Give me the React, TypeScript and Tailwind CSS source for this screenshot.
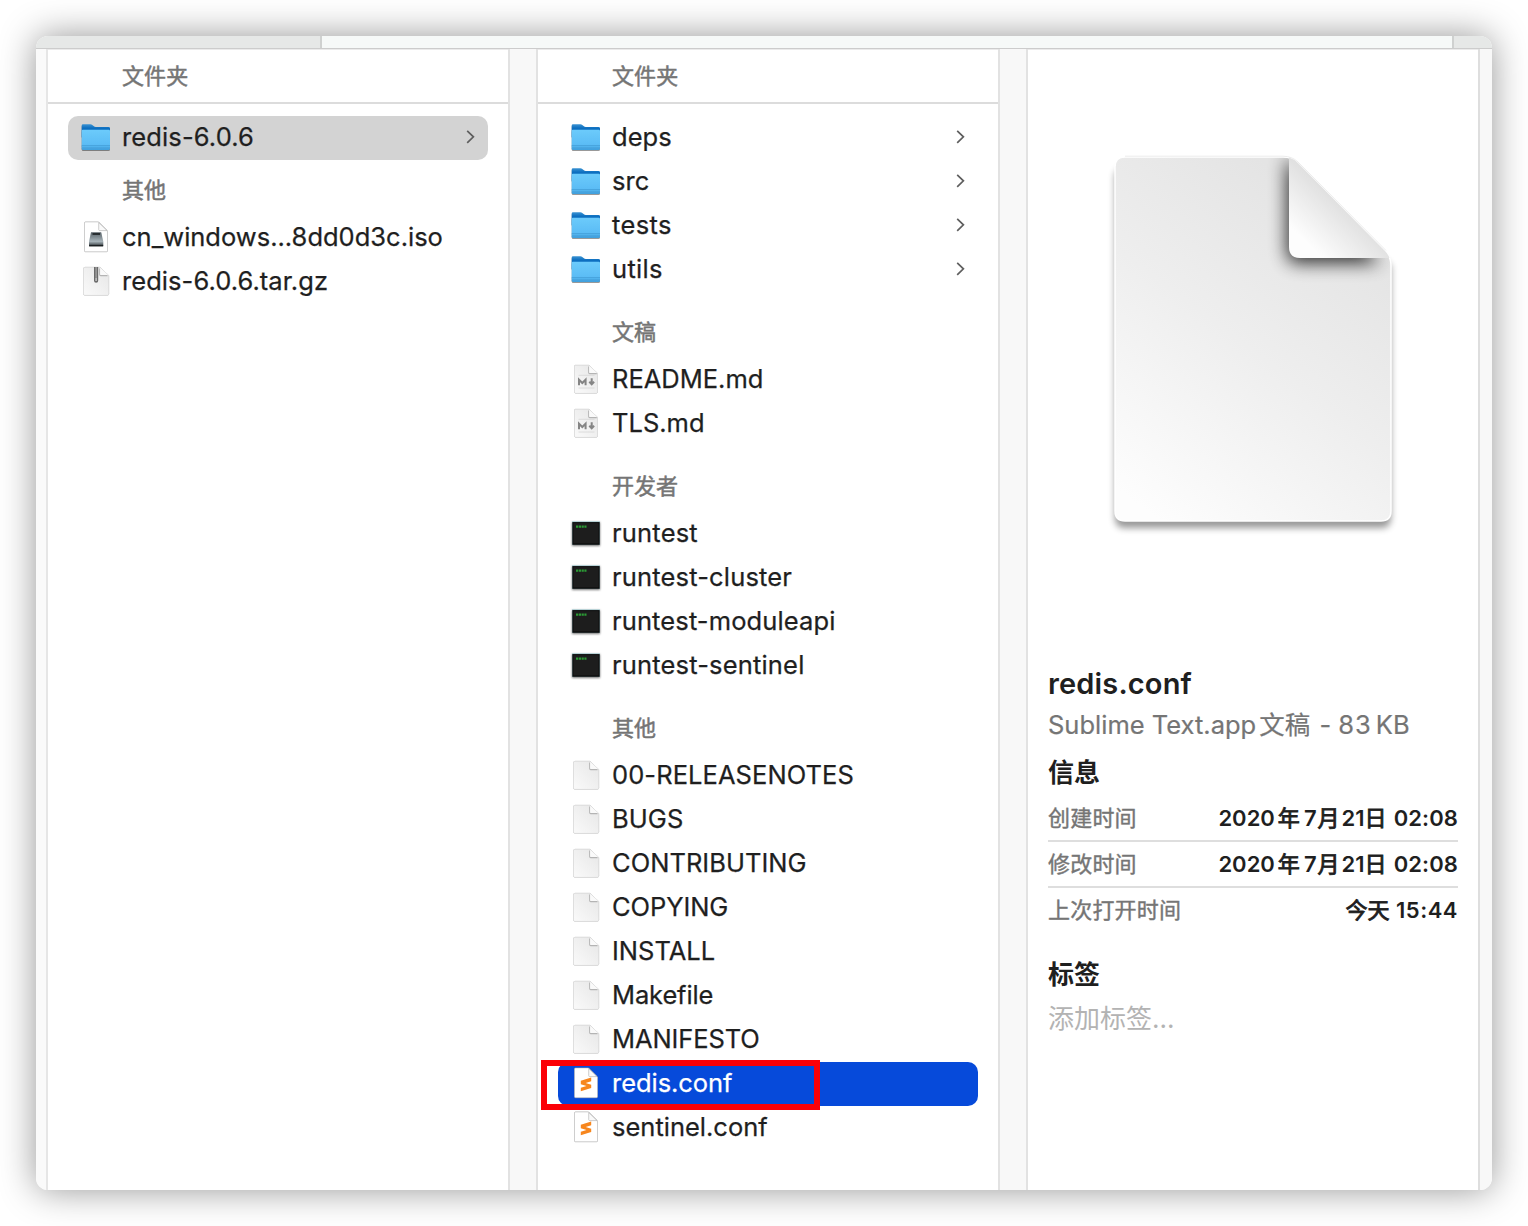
import type { ReactNode } from "react";

type Kind = "folder" | "iso" | "zip" | "md" | "exec" | "doc" | "sublime";
type Item = { name: string; kind: Kind; track?: string };

function Defs() {
  return (
    <svg className="absolute h-0 w-0">
      <defs>
        <linearGradient id="fBack" x1="0" y1="0" x2="0" y2="1">
          <stop offset="0" stopColor="#3b93d2" />
          <stop offset="0.3" stopColor="#0d6fc0" />
        </linearGradient>
        <linearGradient id="fFront" x1="0" y1="0" x2="0" y2="1">
          <stop offset="0" stopColor="#6ccbfb" />
          <stop offset="0.75" stopColor="#5bbcf5" />
          <stop offset="1" stopColor="#3f9fdc" />
        </linearGradient>
        <linearGradient id="pg" x1="1" y1="0" x2="0" y2="1">
          <stop offset="0" stopColor="#e6e6e6" />
          <stop offset="1" stopColor="#fafafa" />
        </linearGradient>
        <linearGradient id="drive" x1="0" y1="0" x2="0" y2="1">
          <stop offset="0" stopColor="#566066" />
          <stop offset="0.65" stopColor="#a8b4ba" />
          <stop offset="1" stopColor="#30363a" />
        </linearGradient>
      </defs>
    </svg>
  );
}

function Icon({ kind }: { kind: Kind }) {
  if (kind === "folder")
    return (
      <svg viewBox="0 0 32 32" className="h-8 w-8 drop-shadow-[0_1px_0.5px_rgba(0,0,0,0.4)]">
        <path d="M1.700 3.500Q1.700 2.300 3 2.300h7.500q1 0 1.800.7l1.600 1.200q.8.700 1.800.7H28.500Q30 4.900 30 6.200V15H1.700Z" fill="url(#fBack)" />
        <path d="M1.700 9Q1.700 7.700 2.900 7.700H28.800Q30 7.700 30 9V26.500q0 1.500-1.500 1.500H3.200Q1.700 28 1.700 26.500Z" fill="url(#fFront)" />
        <path d="M1.700 23.500H30M1.700 26H30" stroke="#429cd6" strokeWidth="0.7" />
      </svg>
    );
  if (kind === "exec")
    return (
      <svg viewBox="0 0 32 32" className="h-8 w-8 drop-shadow-[0_1px_1px_rgba(0,0,0,0.55)]">
        <rect x="2" y="3.300" width="28" height="23.500" fill="#a9cdd3" />
        <rect x="2.300" y="4.100" width="27.400" height="22.700" fill="#050505" />
        <rect x="3.300" y="5.100" width="25.400" height="20.500" fill="#1d1d1d" />
        <path d="M6 8.600h10.500" stroke="#2b9a35" strokeWidth="2.400" strokeDasharray="2.200 0.600" />
      </svg>
    );
  const white = kind === "iso" || kind === "sublime";
  return (
    <svg viewBox="0 0 32 32" className="h-8 w-8 overflow-visible drop-shadow-[0_0.5px_0.700px_rgba(0,0,0,0.35)]">
      <path
        d={
          white
            ? "M5.500 0H18.500L27.500 9V28.700a1 1 0 0 1-1 1H5.500a1 1 0 0 1-1-1V1a1 1 0 0 1 1-1Z"
            : kind === "md"
              ? "M5.500 1.300H19L27.500 9.300V27.800a1.500 1.500 0 0 1-1.500 1.500H6A1.500 1.500 0 0 1 4.500 27.800V2.300a1 1 0 0 1 1-1Z"
              : "M5 1.300H20L28.700 9.500V27.800a1.500 1.500 0 0 1-1.500 1.500H5A1.500 1.500 0 0 1 3.500 27.800V2.800A1.500 1.500 0 0 1 5 1.300Z"
        }
        fill={white ? "#ffffff" : "url(#pg)"}
        stroke={white ? "#c4c4c4" : "#e4e4e4"}
        strokeWidth="0.600"
      />
      {white ? (
        <path d="M18.700 0.500V7.600a1 1 0 0 0 1 1H27Z" fill="#fafafa" stroke="#b8b8b8" strokeWidth="0.700" />
      ) : kind === "md" ? (
        <>
          <path d="M18.700 2.500V8.600a1 1 0 0 0 1 1H26.800" fill="none" stroke="#b4b4b4" strokeWidth="1.100" />
          <path d="M19.200 1.700V8.300a.8.800 0 0 0 .8.800H27Z" fill="#fafafa" />
        </>
      ) : (
        <>
          <path d="M19.700 2.500V8.600a1 1 0 0 0 1 1H27.500" fill="none" stroke="#b4b4b4" strokeWidth="1.100" />
          <path d="M20.200 1.700V8.300a.8.800 0 0 0 .8.800H28Z" fill="#fafafa" />
        </>
      )}
      {kind === "iso" && (
        <>
          <path d="M11 10.300H21.200L23.300 19.500V24.300H9V19.500Z" fill="url(#drive)" />
          <path d="M12.500 12H20" stroke="#15191b" strokeWidth="1.500" />
          <path d="M9.200 23.600H23.100" stroke="#1b1f21" strokeWidth="1.400" />
        </>
      )}
      {kind === "zip" && (
        <>
          <path d="M14 1H18.200V14.700a2.100 2.100 0 0 1-4.200 0Z" fill="#6a6a6a" />
          <path d="M16.100 1.500V10.500" stroke="#c9c9c9" strokeWidth="1.600" strokeDasharray="1 1" />
          <path d="M16.100 11.500V15" stroke="#d5d5d5" strokeWidth="1.300" />
        </>
      )}
      {kind === "md" && (
        <>
          <path d="M8.500 11.300H24.500M8.500 24H24.500" stroke="#d6d6d6" strokeWidth="0.800" />
          <path d="M9 21.300V15.700L12.300 19L15.600 15.700V21.300" fill="none" stroke="#858585" strokeWidth="2" />
          <path d="M21.700 14.300V20M19.300 17.700L21.700 20.200L24.100 17.700" fill="none" stroke="#858585" strokeWidth="2" />
        </>
      )}
      {kind === "sublime" && (
        <path d="M10.800 12.700L21.200 9.500V13.200L15.700 15L21.200 16.700V20.100L10.800 23.300V19.700L16.500 17.900L10.800 16.200Z" fill="#f7861d" />
      )}
    </svg>
  );
}

function Row({ item, arrow, state }: { item: Item; arrow?: boolean; state?: "gray" | "blue" }) {
  const bg = state === "gray" ? "bg-[#d3d3d3]" : state === "blue" ? "bg-[#064ada]" : "";
  return (
    <div className={`mx-5 flex h-11 items-center rounded-[10px] px-3 ${bg}`}>
      <Icon kind={item.kind} />
      <span
        className={`ml-2.5 flex-1 whitespace-nowrap pb-0.5 text-[25.500px] leading-[34px] [-webkit-text-stroke:0.25px_currentColor] ${item.track ?? ""} ${state === "blue" ? "text-white" : "text-[#1f1f1f]"}`}
      >
        {item.name}
      </span>
      {arrow && (
        <svg viewBox="0 0 12 16" className="mb-0.5 h-4 w-3">
          <path d="M3.200 1.800L9.400 7.800L3.200 13.800" fill="none" stroke="#5f5f5f" strokeWidth="1.700" />
        </svg>
      )}
    </div>
  );
}

function Group({ title, first }: { title: string; first?: boolean }) {
  return (
    <div
      className={`flex items-end pb-[11px] pl-[74px] text-[22px] leading-[30px] text-[#757575] [-webkit-text-stroke:0.5px_currentColor] ${first ? "h-14" : "h-[66px]"}`}
    >
      {title}
    </div>
  );
}

function Header() {
  return (
    <div className="mb-3 h-[54px] border-b-2 border-[#dcdcdc] pl-[74px] pt-[11px] text-[22px] leading-[30px] tracking-[0.1px] text-[#757575] [-webkit-text-stroke:0.5px_currentColor]">
      文件夹
    </div>
  );
}

function Gutter() {
  return <div className="w-[30px] shrink-0 border-x-2 border-[#e2e2e2] bg-[#f8f8f8]" />;
}

const top: Item = { name: "redis-6.0.6", kind: "folder", track: "tracking-[0.12px]" };
const others: Item[] = [
  { name: "cn_windows...8dd0d3c.iso", kind: "iso" },
  { name: "redis-6.0.6.tar.gz", kind: "zip", track: "tracking-[0.06px]" },
];
const folders: Item[] = [
  { name: "deps", kind: "folder", track: "tracking-[0.05px]" },
  { name: "src", kind: "folder", track: "tracking-[0.1px]" },
  { name: "tests", kind: "folder", track: "tracking-[0.4px]" },
  { name: "utils", kind: "folder", track: "tracking-[0.3px]" },
];
const docs: Item[] = [
  { name: "README.md", kind: "md" },
  { name: "TLS.md", kind: "md" },
];
const dev: Item[] = [
  { name: "runtest", kind: "exec", track: "tracking-[0.2px]" },
  { name: "runtest-cluster", kind: "exec", track: "tracking-[0.17px]" },
  { name: "runtest-moduleapi", kind: "exec", track: "tracking-[0.12px]" },
  { name: "runtest-sentinel", kind: "exec", track: "tracking-[0.17px]" },
];
const misc: Item[] = [
  { name: "00-RELEASENOTES", kind: "doc", track: "tracking-[0.08px]" },
  { name: "BUGS", kind: "doc", track: "tracking-[0.1px]" },
  { name: "CONTRIBUTING", kind: "doc", track: "tracking-[0.03px]" },
  { name: "COPYING", kind: "doc", track: "tracking-[-0.08px]" },
  { name: "INSTALL", kind: "doc" },
  { name: "Makefile", kind: "doc", track: "tracking-[-0.13px]" },
  { name: "MANIFESTO", kind: "doc", track: "tracking-[-0.1px]" },
];

function Cjk({ children, className = "" }: { children: ReactNode; className?: string }) {
  return <span className={`font-normal [-webkit-text-stroke:0.9px_currentColor] ${className}`}>{children}</span>;
}

const modified = (
  <>
    2020<Cjk className="ml-[3px] mr-1">年</Cjk>7<Cjk className="ml-px mr-0.5">月</Cjk>21<Cjk className="mr-[1.500px]">日</Cjk>{" "}
    <span className="tracking-[0.1px]">02:08</span>
  </>
);

const info: [string, ReactNode][] = [
  ["创建时间", modified],
  ["修改时间", modified],
  [
    "上次打开时间",
    <>
      <Cjk>今天</Cjk> <span className="ml-px tracking-[0.5px]">15:44</span>
    </>,
  ],
];

const BIG_PAGE =
  "M77 107H235Q244 107 250 113L337 201Q343 207 343 216V461Q343 471 333 471H77Q67 471 67 461V117Q67 107 77 107Z";

function Preview() {
  return (
    <svg viewBox="0 0 410 596" className="h-[596px] w-[410px]">
      <defs>
        <linearGradient id="big" gradientUnits="userSpaceOnUse" x1="320" y1="190" x2="110" y2="470">
          <stop offset="0" stopColor="#e4e4e4" />
          <stop offset="0.450" stopColor="#eeeeee" />
          <stop offset="1" stopColor="#fdfdfd" />
        </linearGradient>
        <linearGradient id="fold" gradientUnits="userSpaceOnUse" x1="292" y1="156" x2="258" y2="192">
          <stop offset="0" stopColor="#e1e1e1" />
          <stop offset="1" stopColor="#fdfdfd" />
        </linearGradient>
        <clipPath id="pageClip">
          <path d={BIG_PAGE} />
        </clipPath>
        <filter id="b1" x="-20%" y="-20%" width="140%" height="140%">
          <feGaussianBlur stdDeviation="3.500" />
        </filter>
        <filter id="b2" x="-50%" y="-50%" width="200%" height="200%">
          <feGaussianBlur stdDeviation="9" />
        </filter>
      </defs>
      <path d="M77 114H235L343 216V468Q343 478 333 478H77Q67 478 67 468V124Z" fill="#000" opacity="0.400" filter="url(#b1)" />
      <g clipPath="url(#pageClip)">
        <rect x="60" y="100" width="290" height="380" fill="url(#big)" />
        <path d="M239 106V202Q239 213 250 213H332Z" fill="#000" opacity="0.800" filter="url(#b2)" />
      </g>
      <path d={BIG_PAGE} fill="none" stroke="#fff" strokeWidth="1.500" />
      <path d="M77 106.200H235Q244 106.200 250 112L338 200.500" fill="none" stroke="#ececec" strokeWidth="1" />
      <path d="M241 107.500Q246 109 250 113L337 201Q340 204 341.500 208H252Q241 208 241 197Z" fill="url(#fold)" />
    </svg>
  );
}

export default function App() {
  return (
    <div className="flex h-[1226px] w-[1528px] overflow-hidden bg-white p-9 font-['Inter','Noto_Sans_CJK_SC',sans-serif]">
      <Defs />
      <div className="flex h-[1154px] w-[1456px] flex-col overflow-hidden rounded-xl bg-white shadow-[0_0_36px_rgba(0,0,0,0.42)]">
        <div className="flex h-3 shrink-0 bg-[#e6e8e7]">
          <div className="w-[284px]" />
          <div className="w-[1134px] border-x-2 border-[#cfd1d0] bg-[#f6f9f8]" />
        </div>
        <div className="flex flex-1 border-t border-[#cccccc]">
          <div className="w-3 shrink-0 border-r-2 border-[#e6e6e6] bg-[#fafafa]" />
          <div className="w-[460px] shrink-0 border-t border-[#ebebeb]">
            <Header />
            <Row item={top} arrow state="gray" />
            <Group title="其他" first />
            {others.map((i) => (
              <Row key={i.name} item={i} />
            ))}
          </div>
          <Gutter />
          <div className="relative w-[460px] shrink-0 border-t border-[#ebebeb]">
            <Header />
            {folders.map((i) => (
              <Row key={i.name} item={i} arrow />
            ))}
            <Group title="文稿" />
            {docs.map((i) => (
              <Row key={i.name} item={i} />
            ))}
            <Group title="开发者" />
            {dev.map((i) => (
              <Row key={i.name} item={i} />
            ))}
            <Group title="其他" />
            {misc.map((i) => (
              <Row key={i.name} item={i} />
            ))}
            <Row item={{ name: "redis.conf", kind: "sublime", track: "tracking-[-0.05px]" }} state="blue" />
            <Row item={{ name: "sentinel.conf", kind: "sublime" }} />
            <div className="absolute left-[3px] top-[1010px] h-[50px] w-[279px] border-6 border-[#fb0007]" />
          </div>
          <Gutter />
          <div className="w-[450px] shrink-0 border-t border-[#ebebeb] px-5">
            <Preview />
            <div className="mt-5 text-[29px] font-semibold leading-[36px] tracking-[0.15px] text-[#1f1f1f]">redis.conf</div>
            <div className="mt-1 text-[25.500px] leading-[38px] text-[#757575] [-webkit-text-stroke:0.2px_currentColor]">
              Sublime Text.app<span className="ml-[3px]">文稿</span>
              <span className="ml-0.5"> - </span>
              <span className="tracking-[1px]">83</span>
              <span className="ml-1">KB</span>
            </div>
            <div className="mt-2.5 text-[26px] font-bold leading-[38px] text-[#1f1f1f]">信息</div>
            <div className="mt-1">
              {info.map(([label, value], i) => (
                <div
                  key={label}
                  className={`flex h-[46px] items-center justify-between border-b-2 text-[22px] leading-[30px] ${i < 2 ? "border-[#dedede]" : "border-transparent"}`}
                >
                  <span className="tracking-[0.2px] text-[#757575] [-webkit-text-stroke:0.4px_currentColor]">{label}</span>
                  <span className="font-semibold text-[#1f1f1f]">{value}</span>
                </div>
              ))}
            </div>
            <div className="mt-[22px] text-[26px] font-bold leading-[38px] text-[#1f1f1f]">标签</div>
            <div className="mt-1.5 text-[26px] leading-[38px] text-[#b3b3b3]">添加标签...</div>
          </div>
          <div className="flex-1 border-l-2 border-[#dedede] bg-[#f8f8f8]" />
        </div>
      </div>
    </div>
  );
}
